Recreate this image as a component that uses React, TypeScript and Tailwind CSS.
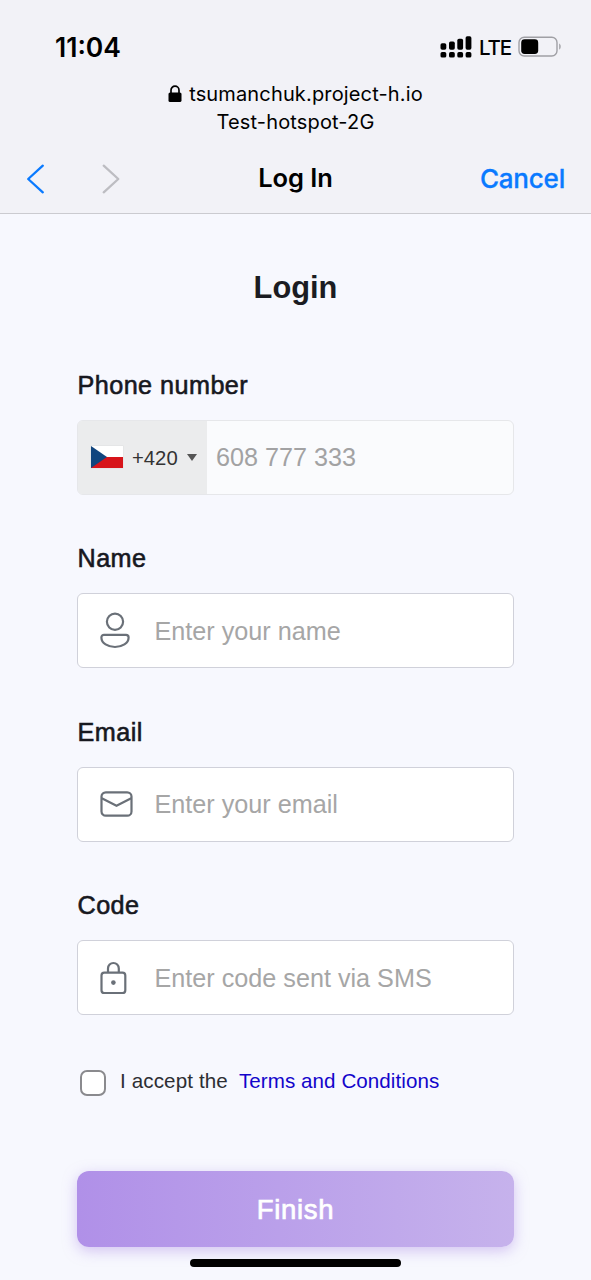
import type { ReactNode } from "react";

function StatusBar() {
  return (
    <div className="flex h-[74px] items-start justify-between pt-[31px] pr-[29px] pl-[55px]">
      <span className="text-[26.5px] leading-[33px] font-semibold">11:04</span>
      <div className="flex h-[32px] items-center">
        <svg width="32" height="24" viewBox="0 0 32 24" className="mr-[7px]">
          <rect x="0.5" y="8.3" width="5.8" height="6.4" rx="1.7" />
          <rect x="9" y="6.6" width="5.8" height="8.1" rx="1.7" />
          <rect x="17.3" y="3.8" width="5.8" height="10.9" rx="1.7" />
          <rect x="25.6" y="1.3" width="5.8" height="13.4" rx="1.7" />
          <rect x="0.5" y="17" width="5.8" height="5.6" rx="1.7" />
          <rect x="9" y="17" width="5.8" height="5.6" rx="1.7" />
          <rect x="17.3" y="17" width="5.8" height="5.6" rx="1.7" />
          <rect x="25.6" y="17" width="5.8" height="5.6" rx="1.7" />
        </svg>
        <span className="w-[39px] pt-[1px] text-[20.5px] leading-[32px] font-medium tracking-[-1.2px]">LTE</span>
        <svg width="44" height="22" viewBox="0 0 44 22">
          <rect x="1" y="1.2" width="38" height="18.8" rx="5.2" fill="none" stroke="#a0a0a5" strokeWidth="1.4" />
          <rect x="3.2" y="3.3" width="17" height="14.7" rx="3.4" />
          <path d="M41.2 7.6c2 .9 2 5.2 0 6.1Z" fill="#a0a0a5" />
        </svg>
      </div>
    </div>
  );
}

function BrowserHeader() {
  return (
    <header className="h-[214px] border-b border-[#cbcbd0] bg-[#f2f2f7] font-['Inter',sans-serif] text-black">
      <StatusBar />
      <div className="flex h-[70px] flex-col items-center pt-[6px] text-[20px] leading-[28px] tracking-[0.15px]">
        <div className="flex items-center">
          <svg width="14" height="18" viewBox="0 0 14 18" className="mr-[7px]">
            <path d="M3 8V5.2a4 4 0 0 1 8 0V8" fill="none" stroke="#000" strokeWidth="1.7" />
            <rect x="0.5" y="7.5" width="13" height="9.5" rx="1.6" />
          </svg>
          <span>tsumanchuk.project-h.io</span>
        </div>
        <span>Test-hotspot-2G</span>
      </div>
      <nav className="grid h-[69px] grid-cols-[1fr_auto_1fr] items-center px-[26px]">
        <div className="flex items-center gap-[57px]">
          <svg width="19" height="30" viewBox="0 0 19 30" fill="none" stroke="#0a7aff" strokeWidth="2.3" strokeLinecap="round" strokeLinejoin="round">
            <path d="M16.8 1.7 2.2 15l14.6 13.3" />
          </svg>
          <svg width="19" height="30" viewBox="0 0 19 30" fill="none" stroke="#bdbdc2" strokeWidth="2.3" strokeLinecap="round" strokeLinejoin="round">
            <path d="M1.7 1.7 16.3 15 1.7 28.3" />
          </svg>
        </div>
        <span className="text-[25.500px] font-semibold tracking-[-0.1px]">Log In</span>
        <button className="justify-self-end text-[26px] font-medium tracking-[-0.2px] text-[#0a7aff] [-webkit-text-stroke:0.3px_#0a7aff]">Cancel</button>
      </nav>
    </header>
  );
}

function Label({ children }: { children: ReactNode }) {
  return (
    <label className="block h-[49px] pl-[0.5px] text-[25.2px] leading-[29px] tracking-[0.45px] text-[#17181f] [-webkit-text-stroke:0.6px_#17181f]">
      {children}
    </label>
  );
}

function Field({ label, icon, placeholder }: { label: string; icon: ReactNode; placeholder: string }) {
  return (
    <div className="h-[173.5px]">
      <Label>{label}</Label>
      <div className="flex h-[75px] items-center rounded-[6px] border-[1.5px] border-[#d0d1da] bg-white">
        <span className="w-[76.5px] pl-[21px]">{icon}</span>
        <span className="text-[25.2px] leading-[30px] text-[#a6a6a6]">{placeholder}</span>
      </div>
    </div>
  );
}

function PhoneField() {
  return (
    <div className="h-[173.5px]">
      <Label>Phone number</Label>
      <div className="flex h-[75px] rounded-[6px] border-[1.5px] border-[#e6e7ea] bg-[#fafbfd]">
        <div className="flex w-[129px] items-center rounded-l-[4px] bg-[#ebeced] pl-[12px]">
          <svg width="34" height="24" viewBox="0 0 34 24">
            <rect x="0.5" y="0.5" width="33" height="23" fill="#dfe0e2" />
            <path d="M1 1h32v11H1Z" fill="#fff" />
            <path d="M1 12h32v11H1Z" fill="#d7141a" />
            <path d="M1 1l16 11L1 23Z" fill="#11457e" />
          </svg>
          <span className="ml-[8px] pt-[2px] text-[20.300px] leading-[28px] text-[#333]">+420</span>
          <svg width="10" height="7" viewBox="0 0 10 7" className="ml-[9px]">
            <path d="M0 0h10L5 7Z" fill="#555" />
          </svg>
        </div>
        <span className="ml-[9px] self-center text-[25.2px] leading-[30px] text-[#a2a2a3]">608 777 333</span>
      </div>
    </div>
  );
}

const iconProps = { fill: "none", stroke: "#6a7078", strokeWidth: 2.2, className: "block" };

function UserIcon() {
  return (
    <svg width="32" height="38" viewBox="0 0 32 38" {...iconProps}>
      <circle cx="16" cy="9.8" r="8.1" />
      <path d="M5 22.800h22a2.600 2.600 0 0 1 2.600 2.600c0 6-6.600 9.600-13.600 9.600S2.400 31.400 2.400 25.400a2.600 2.600 0 0 1 2.600-2.600Z" />
    </svg>
  );
}

function MailIcon() {
  return (
    <svg width="34" height="28" viewBox="0 0 34 28" strokeLinejoin="round" {...iconProps}>
      <rect x="2.5" y="2.300" width="30" height="23.400" rx="4.300" />
      <path d="M2.800 8.300 17.500 15.800 32.200 8.300" />
    </svg>
  );
}

function LockIcon() {
  return (
    <svg width="28" height="36" viewBox="0 0 28 36" {...iconProps}>
      <rect x="2.500" y="12.600" width="23.800" height="20.400" rx="2.800" />
      <path d="M9 12.600V8.400a5.400 5.400 0 0 1 10.800 0v4.200" />
      <circle cx="14.400" cy="22.600" r="2.300" fill="#6a7078" stroke="none" />
    </svg>
  );
}

export default function App() {
  return (
    <div className="flex h-[1280px] w-[591px] flex-col overflow-hidden bg-[#f7f8fe] font-['Liberation_Sans',Arial,sans-serif]">
      <BrowserHeader />
      <main className="flex flex-1 flex-col px-[77px] pt-[53px]">
        <h1 className="h-[103.500px] text-center text-[30.800px] leading-[42px] font-bold text-[#1b1c22]">Login</h1>
        <PhoneField />
        <Field label="Name" icon={<UserIcon />} placeholder="Enter your name" />
        <Field label="Email" icon={<MailIcon />} placeholder="Enter your email" />
        <Field label="Code" icon={<LockIcon />} placeholder="Enter code sent via SMS" />
        <div className="flex h-[106.500px] items-start pt-[2.500px]">
          <span className="mt-[3px] ml-[3px] size-[26px] rounded-[7px] border-2 border-[#8a8a8e] bg-white" />
          <span className="ml-[14px] text-[20.600px] leading-[28px] tracking-[0.12px] text-[#2d2e33]">I accept the</span>
          <a className="ml-[11px] text-[20.600px] leading-[28px] tracking-[0.06px] text-[#1305cb]">Terms and Conditions</a>
        </div>
        <button className="h-[76px] w-[437px] shrink-0 rounded-[12px] bg-linear-to-r from-[#b090e8] to-[#c6b2ec] pt-[2px] text-[27.500px] leading-[30px] tracking-[0.7px] text-white shadow-[0_4px_14px_rgba(176,144,232,0.5)] [-webkit-text-stroke:0.7px_#fff]">
          Finish
        </button>
        <div className="mt-[12px] h-[8px] w-[211px] shrink-0 self-center rounded-full bg-black" />
      </main>
    </div>
  );
}
